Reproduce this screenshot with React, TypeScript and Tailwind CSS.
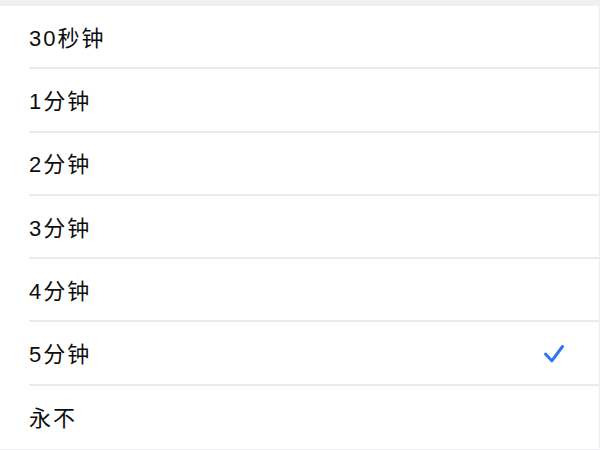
import React from "react";

const items = ["30秒钟", "1分钟", "2分钟", "3分钟", "4分钟", "5分钟", "永不"];

export default function App() {
  return (
    <div
      className="w-[600px] h-[450px] bg-[#efeff4] overflow-hidden flex flex-col"
      style={{ fontFamily: '"Liberation Sans", "Noto Sans CJK SC", sans-serif' }}
    >
      <div className="h-[6px] shrink-0" />
      <div className="bg-white border-r border-[#ededed]">
        {items.map((t, i) => (
          <div key={t} className="pl-[29px] h-[63.3px]">
            <div
              className={`h-full flex items-center justify-between pr-[34px] ${
                i < items.length - 1 ? "border-b-2 border-[#ebebed]" : ""
              }`}
            >
              <span className="text-[22px] text-[#0d0d0d] tracking-[2px] pt-[3px]">{t}</span>
              {i === 5 && (
                <svg width="22" height="20" viewBox="0 0 22 20" className="mt-[2px]">
                  <path
                    d="M2.5 10 L8.8 16.8 L19.5 2.5"
                    fill="none"
                    stroke="#2f73f2"
                    strokeWidth="3"
                    strokeLinecap="round"
                    strokeLinejoin="round"
                  />
                </svg>
              )}
            </div>
          </div>
        ))}
      </div>
    </div>
  );
}
